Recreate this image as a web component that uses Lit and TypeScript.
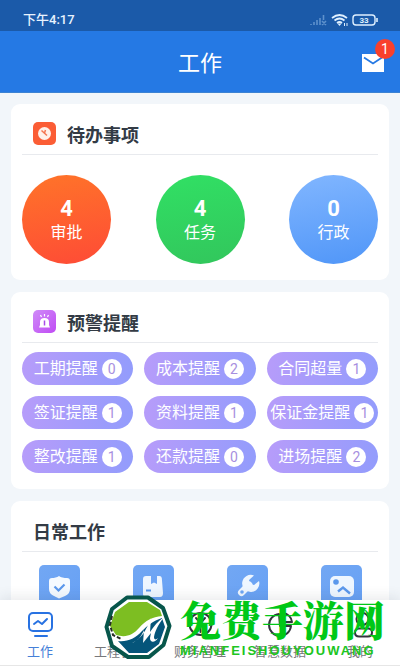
import { LitElement, html, css, svg } from "lit";
import { customElement } from "lit/decorators.js";

const todos = [
  { count: 4, label: "审批", tone: "orange" },
  { count: 4, label: "任务", tone: "green" },
  { count: 0, label: "行政", tone: "blue" },
];

const alerts = [
  { label: "工期提醒", count: 0 },
  { label: "成本提醒", count: 2 },
  { label: "合同超量", count: 1 },
  { label: "签证提醒", count: 1 },
  { label: "资料提醒", count: 1 },
  { label: "保证金提醒", count: 1 },
  { label: "整改提醒", count: 1 },
  { label: "还款提醒", count: 0 },
  { label: "进场提醒", count: 2 },
];

const tools = [
  // shield
  svg`<path d="M20 11 C23 13 27 13 28 13 Q31 13 31 16 V24 Q31 29 26 31 L20 33.500 L15 31 Q10 29 10 24 V16 Q10 13 13 13 C15 13 18 12.500 20 11Z" fill="#f5faff"/><path d="M15.500 21.500l4 4 6-6" fill="none" stroke="#5b98ec" stroke-width="2.200"/>`,
  // package
  svg`<path d="M13 11h5v8l3-1.500 3 1.500v-8h2.500q2 0 2.300 2l1.200 15q0 4-3 4H13q-3 0-3-3V14q0-3 3-3z" fill="#eef6ff"/><path d="M13 25.500h5" stroke="#5b98ec" stroke-width="2"/>`,
  // wrench
  svg`<path d="M14.500 27.500L22 20" stroke="#eef6ff" stroke-width="7" stroke-linecap="round"/><path d="M27 10.500a8.600 8.600 0 1 0 5 5.500l-5 4-4-1-1-4z" fill="#eef6ff"/><circle cx="15" cy="27" r="1.800" fill="#6ea6f4"/>`,
  // picture
  svg`<rect x="9" y="11" width="24" height="21" rx="5" fill="#eef6ff"/><circle cx="15" cy="17" r="2.800" fill="#5b98ec"/><path d="M17 26.500l5-4 7 6" fill="none" stroke="#5b98ec" stroke-width="2.400"/>`,
];

const tabs = [
  { label: "工作", icon: svg`<rect x="2" y="2" width="23" height="18" rx="4"/><path d="M7 13l4-3 4 3 5-5M8 25h12"/>` },
  { label: "工程管理", icon: svg`<path d="M2 8l11-6 12 6-12 6zM2 14l11 6 12-6M2 19l11 6 12-6"/>` },
  { label: "财务管理", icon: svg`<circle cx="13.500" cy="13" r="11"/><path d="M9 7l4.500 5L18 7M13.500 12v9"/>` },
  { label: "智慧数据", icon: svg`<path d="M12 3a11 11 0 1 0 12 12H13zM16 2a10 10 0 0 1 9 9h-9z"/>` },
  { label: "我的", icon: svg`<circle cx="15.500" cy="8" r="6"/><path d="M12 17.500h9q4 0 4 4t-4 4h-9q-4 0-4-4t4-4z"/>` },
];

@customElement("app-root")
export class AppRoot extends LitElement {
  static styles = css`
    :host {
      display: flex;
      flex-direction: column;
      height: 100vh;
      position: relative;
      overflow: hidden;
      background: #f2f6fa;
      color: #333b45;
      font-family: Roboto, "Noto Sans CJK SC", sans-serif;
    }
    * { box-sizing: border-box; }
    button { font: inherit; color: inherit; border: 0; padding: 0; background: none; }
    svg { display: block; }
    h1, h2 { margin: 0; }

    .status {
      flex: none;
      display: flex;
      align-items: center;
      justify-content: space-between;
      height: 31px;
      padding: 9px 21px 0 23px;
      background: #1b5aa9;
      color: #e8f3ff;
      font-size: 13px;
      line-height: 20px;
      font-weight: 500;
    }
    .topbar {
      flex: none;
      display: grid;
      grid-template-columns: 1fr auto 1fr;
      align-items: center;
      height: 62px;
      padding: 2px 16px 0;
      background: #2579e4;
      border-bottom: 1px solid #3d83d3;
      color: #fff;
    }
    .topbar h1 { grid-column: 2; padding-top: 2px; font-size: 22px; line-height: 32px; font-weight: 400; }
    .mail { position: relative; justify-self: end; width: 22px; height: 18px; }
    .mail-count {
      position: absolute;
      top: -15px;
      right: -11px;
      width: 20px;
      height: 20px;
      border-radius: 50%;
      background: #f9402c;
      font-size: 14px;
      line-height: 20px;
      text-align: center;
    }

    main {
      flex: 1;
      min-height: 0;
      overflow: auto;
      scrollbar-width: none;
      display: flex;
      flex-direction: column;
      gap: 12px;
      padding: 11px 11px 0;
    }
    .card { flex: none; border-radius: 9px; background: #fff; padding: 0 11px; }
    .card-head {
      display: flex;
      align-items: center;
      gap: 11px;
      height: 51px;
      padding: 9px 11px 0;
      border-bottom: 1px solid #e8eaee;
    }
    .card-head h2 { padding-top: 4px; font-size: 18px; line-height: 26px; font-weight: 700; }

    .todos { display: flex; justify-content: space-between; padding: 20px 0 16px; }
    .todo {
      display: flex;
      flex-direction: column;
      align-items: center;
      justify-content: center;
      width: 89px;
      height: 89px;
      padding-top: 3px;
      border-radius: 50%;
      color: #fff;
      font-size: 16px;
      line-height: 24px;
    }
    .todo strong { font-size: 22px; line-height: 24px; font-weight: 700; }
    .orange { background: linear-gradient(170deg, #ff7429, #fe4b36); }
    .green { background: linear-gradient(170deg, #31e064, #32c65c); }
    .blue { background: linear-gradient(170deg, #81b6ff, #5096f8); }

    .alerts {
      display: grid;
      grid-template-columns: repeat(3, 1fr);
      gap: 11px;
      padding: 9px 0 16px;
    }
    .alert {
      display: flex;
      align-items: center;
      justify-content: center;
      gap: 4px;
      height: 33px;
      border-radius: 17px;
      background: linear-gradient(100deg, #b79cfa, #929cfc);
      color: #fff;
      font-size: 16px;
      line-height: 24px;
      white-space: nowrap;
    }
    .alert span {
      width: 20px;
      height: 20px;
      border-radius: 50%;
      background: #fff;
      color: #a78fe0;
      font-size: 14px;
      line-height: 20px;
    }

    .daily { padding-bottom: 40px; }
    .tools { display: grid; grid-template-columns: repeat(4, 1fr); margin: 0 -10px; padding-top: 13px; }
    .tool {
      justify-self: center;
      width: 41px;
      height: 41px;
      border-radius: 5px;
      background: linear-gradient(135deg, #72a7f3, #67a1f5);
    }

    .tabs {
      flex: none;
      position: relative;
      display: grid;
      grid-template-columns: repeat(5, 1fr);
      height: 66px;
      border-bottom: 1px solid #e6e6e6;
      background: #fff;
      box-shadow: 0 -3px 12px rgba(40, 50, 70, 0.1);
    }
    .tab {
      display: flex;
      flex-direction: column;
      align-items: center;
      gap: 4px;
      padding-top: 11px;
      color: #77787b;
      font-size: 13px;
      line-height: 20px;
      white-space: nowrap;
    }
    .tab svg { fill: none; stroke: #34343e; stroke-width: 2; stroke-linejoin: round; stroke-linecap: round; }
    .tab.active { color: #4580d8; }
    .tab.active svg { stroke: #2872e2; }

    .brand {
      position: absolute;
      left: 104px;
      bottom: 0;
      display: flex;
      align-items: flex-start;
      gap: 8px;
      height: 71px;
      pointer-events: none;
    }
    .brand-text { display: flex; flex-direction: column; white-space: nowrap; color: #00c817; }
    .brand-name {
      font-family: "Noto Serif CJK SC", "Noto Sans CJK SC", serif;
      font-weight: 900;
      font-size: 41px;
      line-height: 48px;
    }
    .brand-latin {
      font-family: "Liberation Sans", sans-serif;
      font-size: 13px;
      line-height: 16px;
      letter-spacing: 2px;
      color: #20c51f;
      font-weight: 700;
    }
  `;

  render() {
    return html`
      <div class="status">
        <span>下午4:17</span>
        <svg width="70" height="14" viewBox="0 0 70 14" fill="none">
          <path d="M2 12v-1M5 12V9M8 12V7M11 12V5M14.500 7V2M13 8l4 4m0-4l-4 4" stroke="#5e91cc" stroke-width="1.600"/>
          <path d="M23 5q7.500-6 15 0M25.500 7.500q5-4 10 0M28 10q2.500-2 5 0" stroke="#dff0ff" stroke-width="1.700"/>
          <path d="M28.500 10.500h4l-2 2.500z" fill="#dff0ff"/>
          <path d="M35.500 10v3M38 10v3" stroke="#dff0ff"/>
          <rect x="44" y="2" width="22" height="10" rx="3" stroke="#dff0ff" stroke-width="1.400"/>
          <path d="M68 5v4" stroke="#dff0ff" stroke-width="1.600"/>
          <text x="55" y="10" text-anchor="middle" font-size="8" font-weight="700" fill="#dff0ff">33</text>
        </svg>
      </div>
      <header class="topbar">
        <h1>工作</h1>
        <button class="mail" aria-label="消息">
          <svg width="22" height="18" viewBox="0 0 22 18">
            <path d="M0 0h22v18H0z" fill="#fff"/>
            <path d="M2 3.500l9 6 9-6" fill="none" stroke="#2579e4" stroke-width="1.800"/>
          </svg>
          <span class="mail-count">1</span>
        </button>
      </header>
      <main>
        <section class="card">
          <div class="card-head">
            <svg width="23" height="23" viewBox="0 0 23 23">
              <rect width="23" height="23" rx="5" fill="#fb5d35"/>
              <circle cx="11.500" cy="11.500" r="6.500" fill="#fff1e9"/>
              <path d="M8.500 8.500l5.500 5M12.500 8l-1 3" fill="none" stroke="#f47650" stroke-width="1.500"/>
            </svg>
            <h2>待办事项</h2>
          </div>
          <div class="todos">
            ${todos.map((t) => html`<button class="todo ${t.tone}"><strong>${t.count}</strong>${t.label}</button>`)}
          </div>
        </section>
        <section class="card">
          <div class="card-head">
            <svg width="23" height="23" viewBox="0 0 23 23">
              <defs>
                <linearGradient id="violet" x1="0" y1="0" x2="1" y2="1">
                  <stop offset="0" stop-color="#cf8cf8"/><stop offset="1" stop-color="#c04bf4"/>
                </linearGradient>
              </defs>
              <rect width="23" height="23" rx="5" fill="url(#violet)"/>
              <path d="M7 15v-3q0-4 4.500-4t4.500 4v3l1 2.500H6z" fill="#fff"/>
              <path d="M11.500 4v2.500M7.500 5l1 2M15.500 5l-1 2" stroke="#fff" stroke-width="1.200"/>
              <path d="M11.500 10.500v5" stroke="#a94be8" stroke-width="1.500"/>
            </svg>
            <h2>预警提醒</h2>
          </div>
          <div class="alerts">
            ${alerts.map((a) => html`<button class="alert">${a.label}<span>${a.count}</span></button>`)}
          </div>
        </section>
        <section class="card daily">
          <div class="card-head"><h2>日常工作</h2></div>
          <div class="tools">
            ${tools.map((t) => html`<button class="tool"><svg width="41" height="41" viewBox="0 0 41 41">${t}</svg></button>`)}
          </div>
        </section>
      </main>
      <nav class="tabs">
        ${tabs.map((t, i) => html`
          <button class="tab ${i === 0 ? "active" : ""}">
            <svg width="27" height="27" viewBox="0 0 27 27">${t.icon}</svg>${t.label}
          </button>`)}
      </nav>
      <div class="brand">
        <svg width="68" height="65" viewBox="0 0 68 65">
          <path d="M23 2.500h21L59 13l6.500 18-6 19L45 62H24L8 51 2.500 32 8 14z" fill="#fff" stroke="#07564b" stroke-width="4" stroke-linejoin="round"/>
          <path d="M25 7h18l13 8 2 6C48 22 42 25 35 33 29 40 22 43 12 40L6 31l5-14z" fill="#7dbe22"/>
          <path d="M14 46c9 1 17-2 24-10 5-5 11-10 20-13l3 9-6 17-12 9H25z" fill="#05557a"/>
          <path d="M28 48c9-4 14-12 19-25l-1 14c4-6 8-11 14-15-6 8-9 14-10 20 0 3 2 3 4 1-3 5-8 5-8 0l1-5-8 10 1-13c-3 7-7 11-12 13z" fill="#fff"/>
          <path d="M8 21l-2 9 3 10 8 4" fill="none" stroke="#252d24" stroke-width="2" stroke-dasharray="4 2"/>
        </svg>
        <div class="brand-text">
          <span class="brand-name">免费手游网</span>
          <span class="brand-latin">MIANFEISHOUYOUWANG</span>
        </div>
      </div>
    `;
  }
}
